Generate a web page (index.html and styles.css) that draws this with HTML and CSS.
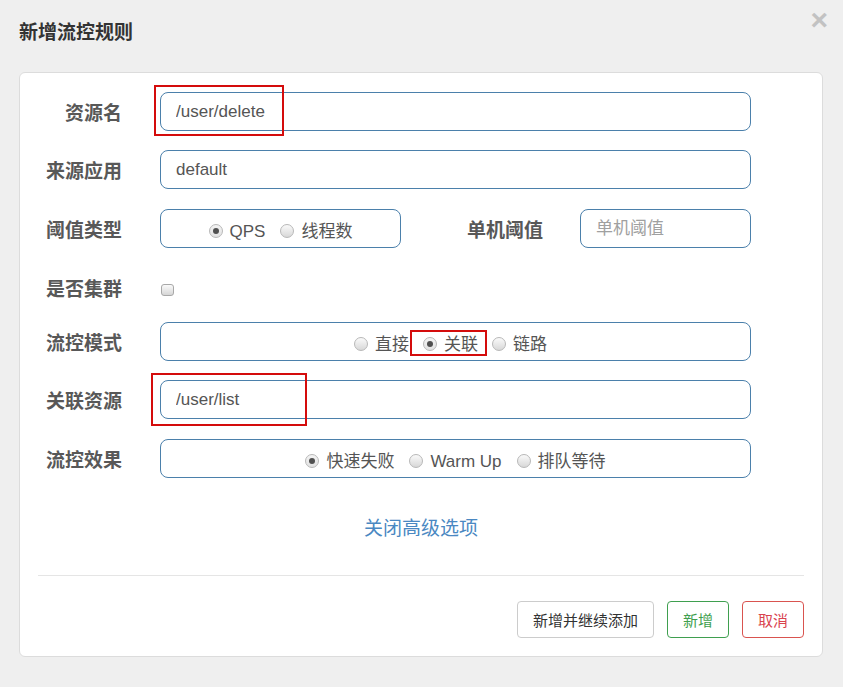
FILE: index.html
```html
<!DOCTYPE html>
<html lang="zh-CN">
<head>
<meta charset="utf-8">
<title>新增流控规则</title>
<link rel="stylesheet" href="styles.css">
</head>
<body>
<div class="modal">
  <div class="header">
    <div class="title">新增流控规则</div>
    <div class="close">×</div>
  </div>
  <div class="card">
    <div class="form">
      <div class="row row-first">
        <div class="label">资源名</div>
        <div class="field">
          <input class="control" type="text" value="/user/delete">
          <span class="mark mark-res"></span>
        </div>
      </div>
      <div class="row">
        <div class="label">来源应用</div>
        <div class="field">
          <input class="control" type="text" value="default">
        </div>
      </div>
      <div class="row">
        <div class="label">阈值类型</div>
        <div class="box box-grade">
          <div class="group">
            <span class="opt"><span class="radio checked"></span>QPS</span>
            <span class="opt"><span class="radio"></span>线程数</span>
          </div>
        </div>
        <div class="label label-count">单机阈值</div>
        <input class="control control-count" type="text" placeholder="单机阈值">
      </div>
      <div class="row row-cluster">
        <div class="label">是否集群</div>
        <span class="checkbox"></span>
      </div>
      <div class="row row-mode">
        <div class="label">流控模式</div>
        <div class="box box-mode">
          <div class="group">
            <span class="opt"><span class="radio"></span>直接</span>
            <span class="opt opt-mark"><span class="radio checked"></span>关联<span class="mark mark-opt"></span></span>
            <span class="opt"><span class="radio"></span>链路</span>
          </div>
        </div>
      </div>
      <div class="row">
        <div class="label">关联资源</div>
        <div class="field">
          <input class="control" type="text" value="/user/list">
          <span class="mark mark-ref"></span>
        </div>
      </div>
      <div class="row row-last">
        <div class="label">流控效果</div>
        <div class="box">
          <div class="group">
            <span class="opt"><span class="radio checked"></span>快速失败</span>
            <span class="opt"><span class="radio"></span>Warm Up</span>
            <span class="opt"><span class="radio"></span>排队等待</span>
          </div>
        </div>
      </div>
      <div class="more"><a href="#">关闭高级选项</a></div>
    </div>
    <div class="footer">
      <button class="btn btn-default" type="button">新增并继续添加</button>
      <button class="btn btn-success" type="button">新增</button>
      <button class="btn btn-danger" type="button">取消</button>
    </div>
  </div>
</div>
</body>
</html>
```

FILE: styles.css
```css
html, body {
  margin: 0;
  padding: 0;
}

body {
  background: #efefef;
  font-family: "Liberation Sans", "Noto Sans CJK SC", sans-serif;
  color: #555;
}

.modal {
  padding: 0 20px 29px 19px;
}

.header {
  display: flex;
  justify-content: space-between;
  align-items: flex-start;
  height: 72px;
}

.title {
  margin-top: 20px;
  font-size: 19px;
  line-height: 26px;
  font-weight: bold;
  color: #333;
}

.close {
  margin-top: 5px;
  margin-right: -5px;
  font-size: 30px;
  line-height: 30px;
  font-weight: bold;
  color: #c2c2c2;
}

.card {
  background: #fff;
  border: 1px solid #dcdcdc;
  border-radius: 6px;
  padding: 19px 18px 18px 18px;
}

.row {
  display: flex;
  align-items: center;
  height: 39px;
  margin-bottom: 20px;
}

.row-first {
  margin-bottom: 19px;
}

.row-cluster {
  margin-bottom: 15px;
}

.row-mode {
  margin-bottom: 19px;
}

.row-last {
  margin-bottom: 0;
}

.label {
  width: 84px;
  flex: none;
  margin-right: 38px;
  text-align: right;
  font-size: 19px;
  font-weight: bold;
  color: #585858;
  white-space: nowrap;
}

.field {
  position: relative;
  width: 591px;
  height: 39px;
}

.control {
  display: block;
  box-sizing: border-box;
  width: 591px;
  height: 39px;
  margin: 0;
  padding: 0 15px;
  border: 1px solid #4b80ab;
  border-radius: 8px;
  background: #fff;
  font-family: "Liberation Sans", "Noto Sans CJK SC", sans-serif;
  font-size: 17px;
  color: #555;
  outline: none;
}

.control::placeholder {
  color: #a0a0a0;
}

.label-count {
  width: 142px;
  margin-right: 37px;
}

.control-count {
  width: 171px;
  height: 39px;
}

.box {
  box-sizing: border-box;
  width: 591px;
  height: 39px;
  border: 1px solid #4b80ab;
  border-radius: 8px;
  display: flex;
  justify-content: center;
  align-items: center;
  flex: none;
}

.box-grade {
  width: 241px;
}

.box-mode {
  padding-right: 10px;
}

.group {
  display: flex;
  align-items: center;
  gap: 15px;
  margin-top: 6px;
  font-size: 17px;
  color: #555;
}

.box-mode .group {
  gap: 14px;
}

.opt {
  position: relative;
  display: inline-flex;
  align-items: center;
  gap: 7px;
  line-height: 20px;
  white-space: nowrap;
}

.radio {
  box-sizing: border-box;
  display: inline-block;
  width: 14px;
  height: 14px;
  border-radius: 50%;
  border: 1px solid #b8b8b8;
  background: linear-gradient(#fafafa, #d8d8d8);
  position: relative;
  margin-top: -2px;
}

.radio.checked {
  background: linear-gradient(#f4f4f4, #e2e2e2);
}

.radio.checked::after {
  content: "";
  position: absolute;
  left: 3px;
  top: 3px;
  width: 6px;
  height: 6px;
  border-radius: 50%;
  background: #505050;
}

.checkbox {
  box-sizing: border-box;
  display: inline-block;
  width: 13px;
  height: 12px;
  margin-left: 1px;
  margin-top: 4px;
  border: 1px solid #a8a8a8;
  border-radius: 3px;
  background: linear-gradient(#fafafa, #d6d6d6);
}

.mark {
  position: absolute;
  border: 2px solid #d40c0c;
  pointer-events: none;
}

.mark-res {
  left: -6px;
  top: -7px;
  width: 126px;
  height: 47px;
}

.mark-ref {
  left: -9px;
  top: -7px;
  width: 152px;
  height: 49px;
}

.mark-opt {
  left: -13px;
  top: -5px;
  width: 73px;
  height: 22px;
}

.more {
  margin-top: 37px;
  text-align: center;
  font-size: 19px;
  line-height: 28px;
}

.more a {
  color: #4a88c2;
  text-decoration: none;
}

.footer {
  margin-top: 32px;
  border-top: 1px solid #e5e5e5;
  padding-top: 25px;
  display: flex;
  justify-content: flex-end;
  gap: 13px;
}

.btn {
  box-sizing: border-box;
  height: 37px;
  padding: 0 15px;
  border-radius: 4px;
  background: #fff;
  font-family: "Liberation Sans", "Noto Sans CJK SC", sans-serif;
  font-size: 15px;
  cursor: pointer;
}

.btn-default {
  border: 1px solid #ccc;
  color: #333;
}

.btn-success {
  border: 1px solid #3f9f4f;
  color: #3f9f4f;
}

.btn-danger {
  border: 1px solid #d9534f;
  color: #d9434f;
}
```
